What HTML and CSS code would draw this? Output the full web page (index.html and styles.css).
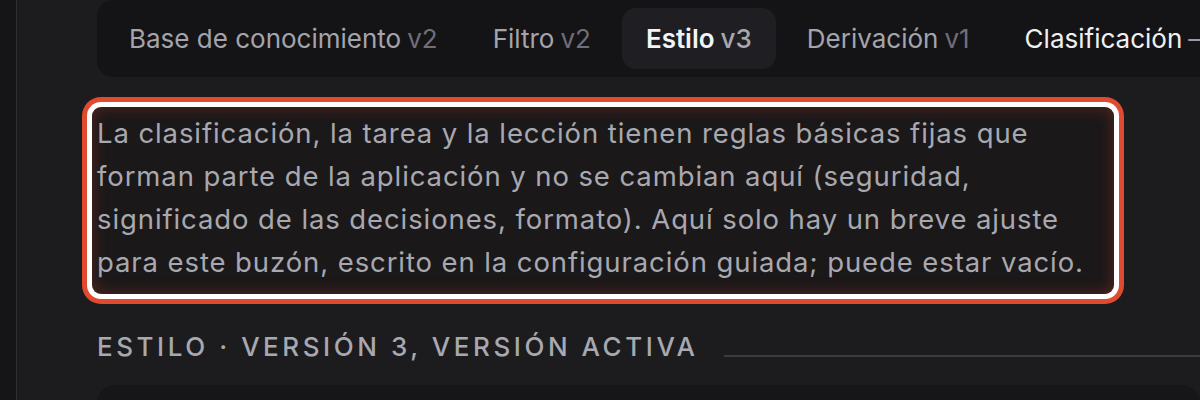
FILE: index.html
```html
<!DOCTYPE html>
<html lang="es">
<head>
<meta charset="utf-8">
<link rel="stylesheet" href="styles.css">
</head>
<body>
<div class="app">
  <aside class="rail"></aside>
  <main class="main">
    <nav class="tabs">
      <div class="tab">Base de conocimiento <span class="ver">v2</span></div>
      <div class="tab">Filtro <span class="ver">v2</span></div>
      <div class="tab active">Estilo <span class="ver">v3</span></div>
      <div class="tab">Derivación <span class="ver">v1</span></div>
      <div class="tab current">Clasificación <span class="dash">—</span></div>
    </nav>
    <p class="note">La clasificación, la tarea y la lección tienen reglas básicas fijas que forman parte de la aplicación y no se cambian aquí (seguridad, significado de las decisiones, formato). Aquí solo hay un breve ajuste para este buzón, escrito en la configuración guiada; puede estar vacío.</p>
    <div class="section-head">
      <h2 class="section-title">Estilo · Versión 3, versión activa</h2>
      <span class="rule"></span>
    </div>
    <div class="card"></div>
  </main>
</div>
</body>
</html>
```
FILE: styles.css
```css
html, body {
  margin: 0;
  padding: 0;
  height: 100%;
  background: #1c1c1f;
  font-family: "Inter", "Noto Sans", sans-serif;
  overflow: hidden;
}
.app {
  display: flex;
  height: 400px;
}
.rail {
  width: 16px;
  flex: none;
  background: #151517;
  border-right: 1px solid #2e2e33;
}
.main {
  flex: 1;
  min-width: 0;
  padding: 0 0 0 80px;
  overflow: hidden;
}
.tabs {
  display: flex;
  align-items: center;
  gap: 7px;
  padding: 8px;
  background: #141416;
  border-radius: 16px;
  width: max-content;
  white-space: nowrap;
}
.tab {
  height: 61px;
  box-sizing: border-box;
  display: flex;
  align-items: center;
  gap: 6px;
  padding: 0 24px;
  font-size: 26px;
  color: #a4a4ac;
  border-radius: 14px;
}
.tab .ver {
  color: #6f6f77;
}
.tab.active {
  background: #1f1f23;
  color: #f4f4f6;
  font-weight: 600;
}
.tab.active .ver {
  color: #a8a8b0;
  font-weight: 500;
}
.tab.current {
  color: #f0f0f2;
}
.tab.current .dash {
  color: #9a9aa2;
}
.note {
  margin: 30px 0 0 -5px;
  width: 1012px;
  padding: 5px 5px 10px;
  font-size: 27.5px;
  line-height: 43px;
  letter-spacing: 0.9px;
  color: #a8a8b0;
  background: #1b1819;
  border-radius: 9px;
  box-shadow:
    inset 0 0 16px rgba(214, 72, 44, 0.32),
    0 0 0 5px #ffffff,
    0 0 0 10px #e04a2f;
}
.section-head {
  display: flex;
  align-items: flex-end;
  gap: 25px;
  margin-top: 37px;
}
.section-title {
  margin: 0;
  font-size: 26px;
  font-weight: 500;
  line-height: 32px;
  letter-spacing: 3.55px;
  text-transform: uppercase;
  color: #a8a8b0;
  white-space: nowrap;
}
.rule {
  flex: 1;
  height: 2px;
  background: #3a3a40;
  margin-bottom: 6px;
}
.card {
  margin-top: 22px;
  height: 200px;
  background: #161618;
  border-radius: 18px;
}
```
